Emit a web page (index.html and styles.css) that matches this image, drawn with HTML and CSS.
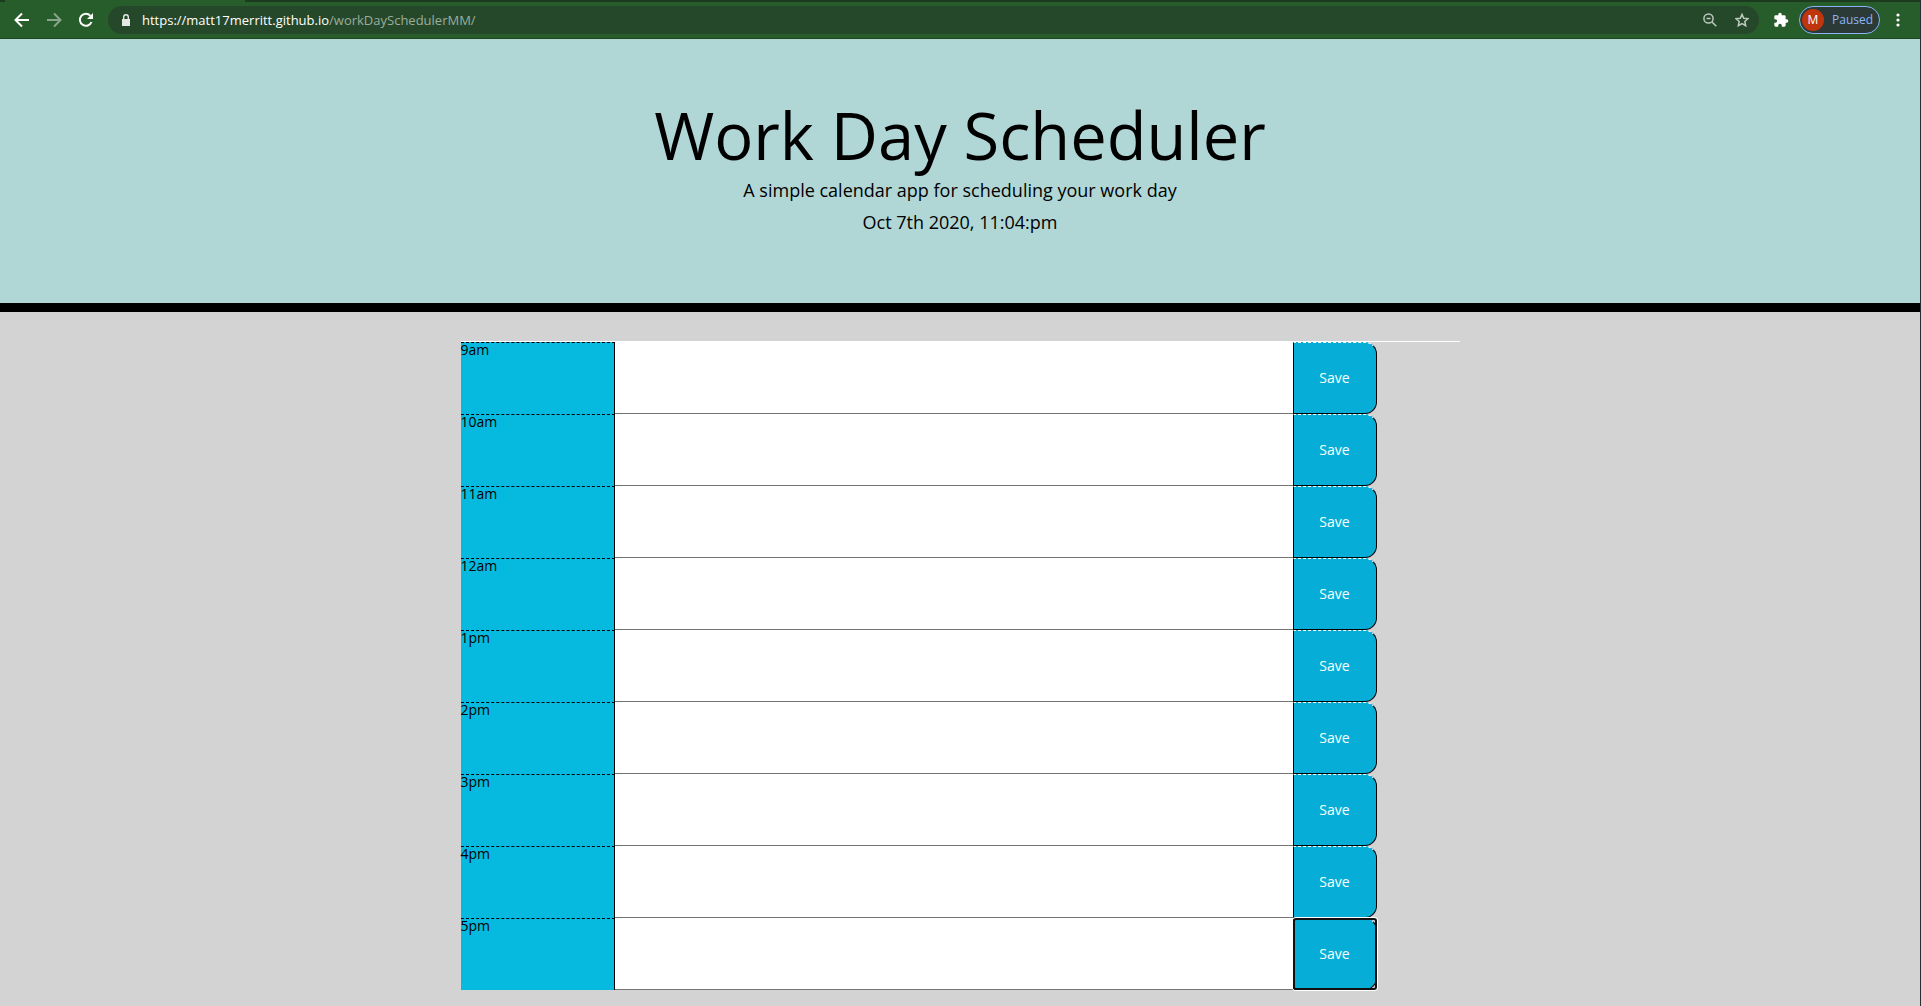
FILE: index.html
```html
<!DOCTYPE html>
<html lang="en">
<head>
<meta charset="utf-8">
<title>Work Day Scheduler</title>
<link rel="stylesheet" href="styles.css">
</head>
<body>
<div class="tabstrip"><div class="tab"></div></div>
<nav class="toolbar" aria-label="Browser">
  <button class="tool" aria-label="Back"><svg viewBox="0 0 16 16"><path d="M15 8H2M8 1.500 1.500 8 8 14.500"/></svg></button>
  <button class="tool dim" aria-label="Forward"><svg viewBox="0 0 16 16"><path d="M1 8h13M8 1.500 14.500 8 8 14.500"/></svg></button>
  <button class="tool" aria-label="Reload"><svg viewBox="0 0 16 16"><path d="M13.500 10A6 6 0 1 1 12.400 3.800"/><path class="solid" d="M15 1v6H9z"/></svg></button>
  <div class="omnibox">
    <svg class="lock" viewBox="0 0 10 12"><path d="M1 5h8v7H1z"/><path class="shackle" d="M2.700 5V3a2.300 2.300 0 0 1 4.600 0v2"/></svg>
    <a class="url" href="#"><span class="host">https://matt17merritt.github.io</span>/workDaySchedulerMM/</a>
    <button class="mini" aria-label="Zoom"><svg viewBox="0 0 14 14"><circle cx="5.500" cy="5.500" r="4.600"/><path d="m9 9 4.300 4.300M3.500 5.500h4"/></svg></button>
    <button class="mini" aria-label="Bookmark"><svg viewBox="0 0 14 14"><path d="m7 1.400 1.700 3.900 4.300.4-3.200 2.800.9 4.200L7 10.500l-3.700 2.200.9-4.200L1 5.700l4.300-.4z"/></svg></button>
  </div>
  <button class="puzzle" aria-label="Extensions"><svg viewBox="0 0 24 24"><path d="M20.500 11H19V7a2 2 0 0 0-2-2h-4V3.500a2.500 2.500 0 0 0-5 0V5H4a2 2 0 0 0-2 2v3.800h1.500a2.700 2.700 0 0 1 0 5.400H2V20a2 2 0 0 0 2 2h3.800v-1.500a2.700 2.700 0 0 1 5.400 0V22H17a2 2 0 0 0 2-2v-4h1.500a2.500 2.500 0 0 0 0-5z"/></svg></button>
  <button class="profile"><span class="avatar">M</span><span class="state">Paused</span></button>
  <button class="menu" aria-label="Menu"><svg viewBox="0 0 4 14"><circle cx="2" cy="2" r="1.600"/><circle cx="2" cy="7" r="1.600"/><circle cx="2" cy="12" r="1.600"/></svg></button>
</nav>
<div class="page">
  <header class="jumbotron">
    <h1>Work Day Scheduler</h1>
    <p>A simple calendar app for scheduling your work day</p>
    <p>Oct 7th 2020, 11:04:pm</p>
  </header>
  <main class="container">
    <form class="row"><label class="hour" for="h9">9am</label><textarea id="h9"></textarea><button type="button" class="save">Save</button></form>
    <form class="row"><label class="hour" for="h10">10am</label><textarea id="h10"></textarea><button type="button" class="save">Save</button></form>
    <form class="row"><label class="hour" for="h11">11am</label><textarea id="h11"></textarea><button type="button" class="save">Save</button></form>
    <form class="row"><label class="hour" for="h12">12am</label><textarea id="h12"></textarea><button type="button" class="save">Save</button></form>
    <form class="row"><label class="hour" for="h13">1pm</label><textarea id="h13"></textarea><button type="button" class="save">Save</button></form>
    <form class="row"><label class="hour" for="h14">2pm</label><textarea id="h14"></textarea><button type="button" class="save">Save</button></form>
    <form class="row"><label class="hour" for="h15">3pm</label><textarea id="h15"></textarea><button type="button" class="save">Save</button></form>
    <form class="row"><label class="hour" for="h16">4pm</label><textarea id="h16"></textarea><button type="button" class="save">Save</button></form>
    <form class="row"><label class="hour" for="h17">5pm</label><textarea id="h17"></textarea><button type="button" class="save active">Save</button></form>
  </main>
</div>
</body>
</html>
```
FILE: styles.css
```css
* { box-sizing: border-box; }
body {
  margin: 0;
  min-height: 100vh;
  display: flex;
  flex-direction: column;
  font-family: "Open Sans", sans-serif;
  color: #000;
  background: #d3d3d3;
  border-right: 1px solid #2b2f33;
}
button { font-family: inherit; margin: 0; padding: 0; border: 0; background: none; }
svg { display: block; fill: none; }

/* browser bar */
.tabstrip { height: 2px; background: #1c3a1e; }
.tab { width: 240px; height: 2px; margin-left: 5px; background: #275d2a; }
.toolbar {
  display: flex;
  align-items: center;
  height: 37px;
  padding: 0 20px 0 14px;
  background: #275d2a;
  border-bottom: 1px solid #1f4521;
}
.tool { width: 16px; margin-right: 16px; }
.tool svg { width: 16px; height: 16px; stroke: #fff; stroke-width: 2; }
.dim { opacity: .45; }
.tool .solid { fill: #fff; stroke: none; }
.omnibox {
  flex: 1;
  display: flex;
  align-items: center;
  height: 28px;
  margin: 0 14px 0 -2px;
  padding: 0 10px 0 13px;
  border-radius: 14px;
  background: #26482a;
}
.lock { width: 10px; height: 12px; margin-right: 11px; fill: #e4e9e4; }
.lock .shackle { fill: none; stroke: #e4e9e4; stroke-width: 1.400; }
.url { flex: 1; font-size: 13px; line-height: 20px; color: #9bad9d; text-decoration: none; }
.host { color: #fff; }
.mini { margin-left: 18px; }
.mini svg { width: 14px; height: 14px; stroke: #bdc8be; stroke-width: 1.500; }
.puzzle { margin-right: 10px; }
.puzzle svg { width: 16px; height: 16px; fill: #fff; }
.profile {
  display: flex;
  align-items: center;
  width: 81px;
  height: 28px;
  margin-right: 16px;
  padding-left: 2px;
  border: 1px solid #8ab4f8;
  border-radius: 14px;
  background: #2b3a36;
}
.avatar {
  width: 22px;
  height: 22px;
  border-radius: 50%;
  background: #bf360c;
  color: #fff;
  font-size: 12px;
  line-height: 22px;
}
.state { margin-left: 8px; color: #8ab4f8; font-size: 12px; line-height: 20px; }
.menu svg { width: 4px; height: 14px; fill: #fff; }

/* page heading */
.page { flex: 1; }
.jumbotron {
  height: 273px;
  padding-top: 57px;
  text-align: center;
  background: #b0d7d6;
  border-bottom: 9px solid #000;
}
.jumbotron h1 { margin: 0 0 3px; font-size: 65px; font-weight: 400; line-height: 78px; }
.jumbotron p { margin: 0 0 5px; font-size: 18px; line-height: 27px; }

/* hour rows */
.container {
  max-width: 999px;
  margin: 29px auto 0;
  border-top: 1px solid #fff;
}
.row {
  display: grid;
  grid-template-columns: 154px 1fr 84px;
  height: 72px;
  margin-right: 83px;
}
.hour {
  border-top: 1px dashed #000;
  border-right: 1px solid #000;
  background: #06badf;
  font-size: 14px;
  line-height: 14px;
}
.row textarea {
  display: block;
  width: 100%;
  height: 100%;
  margin: 0;
  padding: 2px;
  border: 0;
  border-bottom: 1px solid #767676;
  background: #fff;
  font: 14px/20px "Open Sans", sans-serif;
  resize: none;
}
.save {
  position: relative;
  padding-bottom: 2px;
  border: 1px solid #000;
  border-top: 1px dashed #fff;
  border-radius: 0 12px 12px 0;
  background: #06aed7;
  color: #fff;
  font-size: 14px;
}
.active::after {
  content: "";
  position: absolute;
  inset: -1px;
  border: 2px solid #101010;
  border-radius: 3px;
  box-shadow: 0 0 0 1px #fff;
}
```
